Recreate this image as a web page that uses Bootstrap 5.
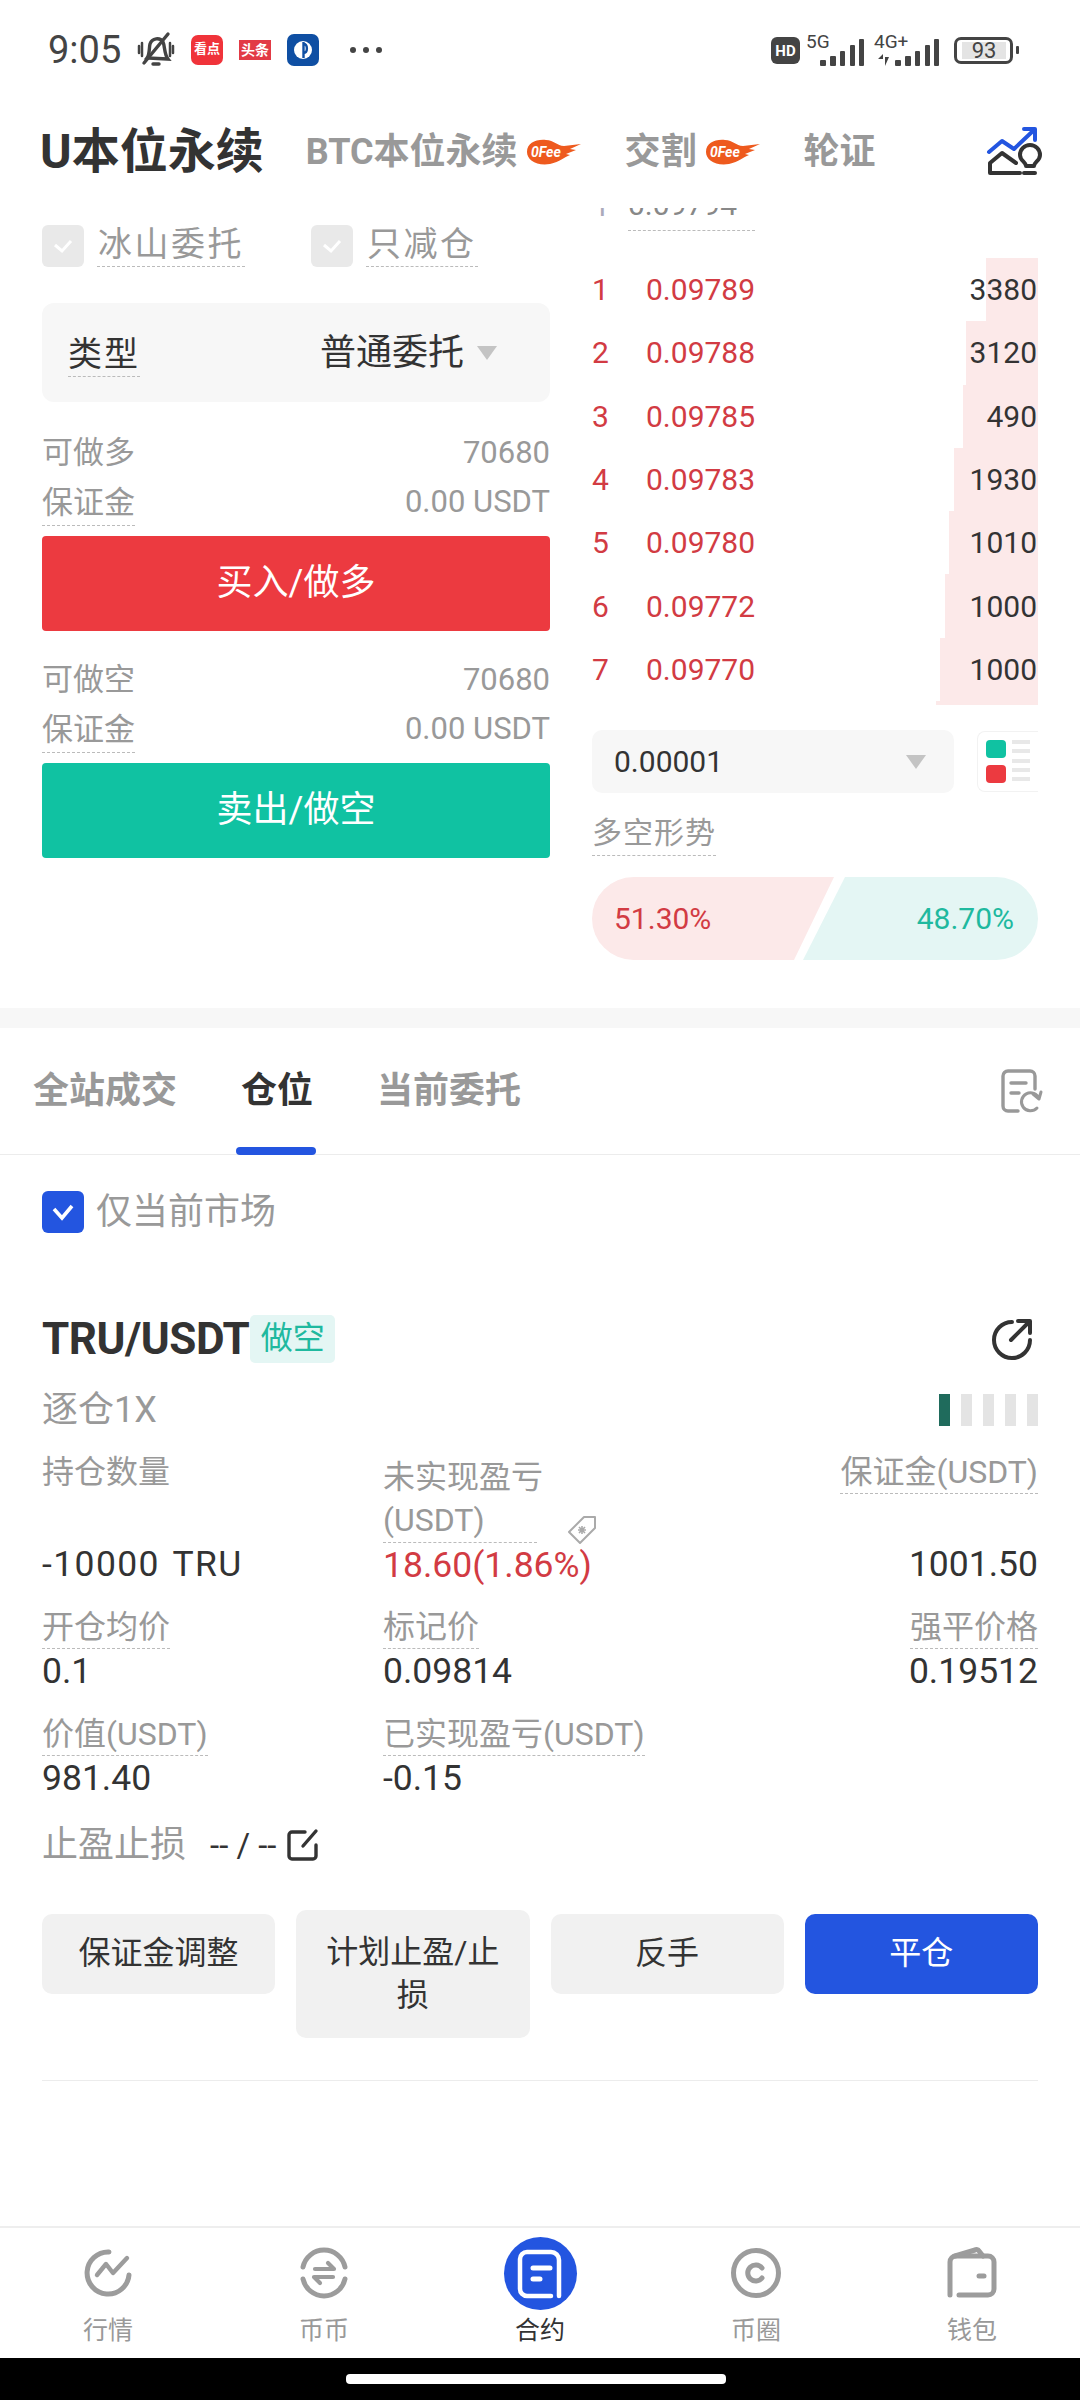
<!DOCTYPE html>
<html lang="zh-CN">
<head>
    <meta charset="UTF-8">
    <meta name="viewport" content="width=device-width, initial-scale=1.0">
    <title>U本位永续</title>
    <link href="https://cdn.jsdelivr.net/npm/bootstrap@5.3.0/dist/css/bootstrap.min.css" rel="stylesheet">
    <style>
        body {
            margin: 0;
            width: 1080px;
            height: 2400px;
            overflow: hidden;
            background: #fff;
            color: #333;
            font-family: Roboto, "Noto Sans CJK SC", sans-serif;
            display: flex;
            flex-direction: column;
        }
        svg { display: block; flex: none; overflow: visible; }

        /* status bar */
        #status-bar { height: 100px; padding: 0 61px 0 48px; color: #444; }
        .clock { font-size: 38px; line-height: 1; width: 89px; }
        .app-tile { color: #fff; text-align: center; font-weight: 700; }
        .tile-watch { width: 32px; height: 30px; margin-left: 16px; background: #f0333a; border-radius: 7px; font-size: 13px; line-height: 28px; }
        .tile-news { width: 32px; height: 20px; margin-left: 16px; background: #e23a45; font-size: 14px; line-height: 20px; }
        .batt-box { width: 59px; height: 27px; border: 3px solid #444; border-radius: 7px; padding: 2px 5px; margin-left: 14px; }
        .batt-fill { background: #e4e4e4; height: 17px; font-size: 22px; line-height: 17px; text-align: center; width: 44px; }
        .batt-nub { width: 3px; height: 8px; background: #444; border-radius: 1px; margin-left: 3px; }

        /* product tabs */
        #product-tabs { height: 104px; padding: 0 37px 0 40px; }
        .title-main { font-size: 48px; font-weight: 700; color: #333; line-height: 1; margin-right: 42px; }
        .title-sub { font-size: 36px; font-weight: 700; color: #999; line-height: 1; margin-right: 44px; }

        /* trade area */
        #trade-area { height: 804px; padding: 0 42px; gap: 42px; overflow: hidden; }
        #order-form { width: 508px; flex: none; }
        #book-side { width: 446px; flex: none; }
        .dash-label { display: inline-block; border-bottom: 1px dashed #bbb; color: #999; }
        .tick-box { width: 42px; height: 42px; border-radius: 6px; background: #e9e9e9; display: flex; align-items: center; justify-content: center; }
        .tick-box.is-on { background: #2355e0; }
        .check-row { padding-top: 21px; height: 66px; }
        .check-text { font-size: 34px; line-height: 44px; padding: 0 1px; margin-left: 13px; letter-spacing: 2.5px; margin-top: -3px; }
        .type-select { height: 99px; margin-top: 33px; padding: 0 53px 0 26px; background: #f7f7f7; border-radius: 12px; }
        .type-key { font-size: 34px; line-height: 44px; color: #333; letter-spacing: 2px; margin-top: 4px; }
        .type-val { font-size: 36px; color: #333; line-height: 1; margin-right: 13px; }
        .drop-tri { width: 0; height: 0; border-left: 10px solid transparent; border-right: 10px solid transparent; border-top: 14px solid #c4c4c4; }
        .info-row { height: 49px; color: #999; font-size: 31px; }
        .info-row .dash-label { font-size: 31px; line-height: 44px; margin-top: 2px; }
        .info-head { font-size: 31px; }
        .btn.trade-btn { display: block; width: 100%; height: 95px; border: 0; border-radius: 4px; color: #fff; font-size: 36px; line-height: 95px; padding: 0; margin-top: 9px; }
        .trade-long { background: #ec3a40; }
        .trade-short { background: #10c2a2; }

        /* order book */
        .book-clip { height: 23px; margin-top: 4px; overflow: hidden; position: relative; }
        .book-clip .clip-inner { position: absolute; bottom: 0; left: 0; display: flex; align-items: flex-end; }
        .clip-num { width: 36px; font-size: 30px; line-height: 50px; color: #aab; padding-left: 1px; }
        .clip-price { font-size: 30px; line-height: 50px; color: #888; border-bottom: 1px dashed #bbb; padding-right: 18px; }
        .book-rows { margin-top: 27px; }
        .book-row { height: 63.3px; position: relative; font-size: 30px; }
        .depth-bar { position: absolute; top: 0; right: 0; bottom: 0; background: #fce9e9; }
        .lvl { width: 54px; color: #d23b43; position: relative; }
        .price-red { color: #d23b43; position: relative; }
        .qty { margin-left: auto; color: #333; position: relative; padding-right: 1px; }
        .depth-tail { height: 4px; margin-left: auto; background: #fce9e9; }
        .step-row { margin-top: 25px; }
        .step-select { width: 362px; height: 63px; background: #f7f7f7; border-radius: 10px; padding: 0 28px 0 22px; font-size: 30px; color: #333; }
        .layout-btn { width: 61px; height: 61px; border: 1px solid #f2f2f2; border-right: 0; border-radius: 8px 0 0 8px; padding: 8px; gap: 6px; }
        .ly-cells { gap: 7px; }
        .ly-cell { width: 20px; height: 19px; border-radius: 4px; }
        .ly-lines { display: flex; flex-direction: column; justify-content: space-between; flex: 1; padding: 0 0 2px; }
        .ly-lines i { display: block; height: 4px; background: #e8e8e8; }
        .trend-title { font-size: 30px; line-height: 44px; letter-spacing: 1px; margin-top: 18px; }
        .trend-pill { margin-top: 21px; height: 83px; font-size: 30px; }
        .trend-left { width: 242px; height: 83px; flex: none; background: #fce9e9; color: #d23b43; border-radius: 42px 0 0 42px; padding-left: 22px; clip-path: polygon(0 0, 100% 0, 202px 100%, 0 100%); }
        .trend-right { width: 235px; height: 83px; flex: none; margin-left: -31px; background: #e4f6f4; color: #1fb99f; border-radius: 0 42px 42px 0; padding-right: 24px; clip-path: polygon(42px 0, 100% 0, 100% 100%, 0 100%); }

        .gap-band { height: 20px; background: #f7f7f7; }

        /* list tabs */
        #list-tabs { height: 127px; padding: 0 37px 0 33px; border-bottom: 1px solid #ececec; }
        .list-tab { font-size: 36px; font-weight: 700; color: #999; position: relative; margin-right: 64px; line-height: 1; }
        .list-tab.is-active { color: #333; }
        .list-tab.is-active::after { content: ""; position: absolute; left: -5px; right: -3px; bottom: -46px; height: 8px; background: #2355e0; border-radius: 4px; }

        /* position card */
        #position-pane { padding: 0 42px; flex: 1; }
        .only-row { margin-top: 36px; height: 42px; }
        .only-text { font-size: 36px; color: #999; margin-left: 12px; line-height: 1; }
        .pair-row { margin-top: 82px; height: 48px; }
        .pair-name { font-size: 44px; font-weight: 700; color: #333; line-height: 1; letter-spacing: -.5px; }
        .side-tag { width: 85px; height: 48px; line-height: 46px; text-align: center; background: #e4f6f4; color: #1fb99f; font-size: 32px; border-radius: 5px; margin-left: 1px; }
        .margin-row { height: 50px; margin-top: 22px; }
        .margin-mode { font-size: 36px; color: #999; line-height: 1; }
        .risk-bars { gap: 11px; }
        .risk-bars i { display: block; width: 11px; height: 32px; background: #e4e4e4; }
        .risk-bars i.is-on { background: #1f6b5c; }
        .metric-grid { display: grid; grid-template-columns: 341px 1fr auto; margin-top: 15px; }
        .metric { display: flex; flex-direction: column; align-items: flex-start; }
        .metric.at-end { align-items: flex-end; }
        .metric-key { font-size: 32px; line-height: 44px; color: #999; border-bottom: 1px dashed #bbb; height: 44px; white-space: nowrap; }
        .metric-key.no-dash { border-bottom: 0; }
        .metric-val { font-size: 35.5px; line-height: 44px; color: #333; }
        .metric-val.wide-val { letter-spacing: 1.4px; word-spacing: 3px; }
        .row-one { height: 136px; justify-content: space-between; }
        .row-next { height: 88px; margin-top: 19px; }
        .wrap-key { height: auto; line-height: 43px; margin-top: 6px; width: 154px; position: relative; }
        .tag-mark { position: absolute; left: 183px; top: 58px; }
        .stop-row { margin-top: 22px; height: 46px; }
        .stop-key { font-size: 36px; color: #999; line-height: 1; }
        .stop-val { font-size: 33px; color: #333; line-height: 1; margin: 0 11px 0 24px; }
        .act-row { display: grid; grid-template-columns: repeat(4, 1fr); margin-top: 46px; gap: 21px; align-items: start; }
        .btn.act-btn { background: #f1f1f1; color: #333; border: 0; border-radius: 10px; font-size: 32px; line-height: 43px; padding: 18px 16px 19px; }
        .btn.act-btn.act-tall { margin-top: -4px; padding: 21px 26px; }
        .btn.act-btn.act-main { background: #2355e0; color: #fff; }
        .card-rule { margin-top: 42px; border-top: 1px solid #ececec; }

        /* bottom nav */
        #bottom-nav { height: 132px; border-top: 2px solid #eee; flex: none; }
        .nav-slot { flex: 1 1 0; display: flex; flex-direction: column; align-items: center; height: 130px; color: #999; font-size: 25px; }
        .nav-glyph { height: 90px; display: flex; align-items: center; justify-content: center; }
        .nav-slot span { line-height: 1; }
        .nav-slot.is-active { color: #333; }
        #gesture-bar { height: 42px; background: #000; flex: none; padding-top: 16px; }
        .gesture-pill { width: 380px; height: 10px; background: #fff; border-radius: 4px; margin: 0 auto; transform: translateX(-4px); }
    </style>
</head>
<body>
    <div id="status-bar" class="d-flex align-items-center flex-none">
        <div class="clock">9:05</div>
        <svg width="38" height="36" viewBox="0 0 38 36" fill="none" stroke="#444" stroke-width="3.4" stroke-linecap="round">
            <path d="M10 26 C13 22 12 15 13 12 C15 6 23 5 26 10 C28 14 27 22 31 27 Z"/>
            <path d="M16 32 H22"/>
            <path d="M7 31 L31 2"/>
            <path d="M2 14 V21 M5 11 V24 M33 11 V24 M36 14 V21" stroke-width="2.5"/>
        </svg>
        <div class="app-tile tile-watch">看点</div>
        <div class="app-tile tile-news">头条</div>
        <svg class="ms-3" width="32" height="32" viewBox="0 0 32 32">
            <rect width="32" height="32" rx="7" fill="#0f4fa3"/>
            <circle cx="16" cy="16" r="9" fill="#fff"/>
            <path d="M16.5 8 V24 M16.5 10 C21 10 21 19 16.5 19" fill="none" stroke="#0f4fa3" stroke-width="2.4"/>
        </svg>
        <svg style="margin-left:30px" width="34" height="8" viewBox="0 0 34 8" fill="#444">
            <circle cx="4" cy="4" r="3"/><circle cx="17" cy="4" r="3"/><circle cx="30" cy="4" r="3"/>
        </svg>
        <svg class="ms-auto" width="29" height="27" viewBox="0 0 29 27">
            <rect width="29" height="27" rx="6" fill="#444"/>
            <text x="14.5" y="19" text-anchor="middle" font-family="Roboto" font-weight="700" font-size="15" fill="#fff">HD</text>
        </svg>
        <svg style="margin-left:6px" width="60" height="34" viewBox="0 0 60 34" fill="#444">
            <text x="0" y="15" font-family="Roboto" font-size="19">5G</text>
            <rect x="14" y="27" width="6" height="6" rx="1"/><rect x="24" y="23" width="6" height="10" rx="1"/><rect x="34" y="18" width="5" height="15" rx="1"/><rect x="44" y="12" width="5" height="21" rx="1"/><rect x="53" y="6" width="5" height="27" rx="1"/>
        </svg>
        <svg style="margin-left:8px" width="66" height="34" viewBox="0 0 66 34" fill="#444">
            <text x="0" y="15" font-family="Roboto" font-size="19">4G+</text>
            <path d="M4 26 H9 V21 Z M11 33 V24 L15 24 Z M11 23 L4 27 Z"/>
            <rect x="21" y="27" width="6" height="6" rx="1"/><rect x="31" y="23" width="6" height="10" rx="1"/><rect x="41" y="18" width="5" height="15" rx="1"/><rect x="51" y="12" width="5" height="21" rx="1"/><rect x="60" y="6" width="5" height="27" rx="1"/>
        </svg>
        <div class="batt-box"><div class="batt-fill">93</div></div>
        <div class="batt-nub"></div>
    </div>

    <div id="product-tabs" class="d-flex align-items-center">
        <div class="title-main">U本位永续</div>
        <div class="title-sub d-flex align-items-center">BTC本位永续
            <svg class="ms-2" width="55" height="26" viewBox="0 0 55 26"><path d="M1 13 C1 4 10 0 20 1 C28 1 31 7 38 7 L55 5 L44 10 L50 11 L40 15 L44 16 C38 18 34 23 24 25 C10 27 1 21 1 13 Z" fill="#ee5a1e"/><text x="5" y="18" font-family="Roboto" font-weight="700" font-style="italic" font-size="14" fill="#fff">0Fee</text></svg>
        </div>
        <div class="title-sub d-flex align-items-center">交割
            <svg class="ms-2" width="55" height="26" viewBox="0 0 55 26"><path d="M1 13 C1 4 10 0 20 1 C28 1 31 7 38 7 L55 5 L44 10 L50 11 L40 15 L44 16 C38 18 34 23 24 25 C10 27 1 21 1 13 Z" fill="#ee5a1e"/><text x="5" y="18" font-family="Roboto" font-weight="700" font-style="italic" font-size="14" fill="#fff">0Fee</text></svg>
        </div>
        <div class="title-sub">轮证</div>
        <svg class="ms-auto" width="56" height="52" viewBox="0 0 56 52" fill="none" stroke-linecap="round" stroke-linejoin="round">
            <path d="M2 26 L15 15 L27 23 L47 4 M37 3 H48 V14" stroke="#2355e0" stroke-width="4"/>
            <path d="M3 47 V37 L15 27 L29 37 M3 47 H33" stroke="#333" stroke-width="4"/>
            <path d="M39 40 C39 36 33 35 33 29 A10 10 0 0 1 53 29 C53 35 47 36 47 40 Z M37 47 H48" stroke="#333" stroke-width="4"/>
        </svg>
    </div>

    <div id="trade-area" class="d-flex">
        <div id="order-form">
            <div class="check-row d-flex align-items-start">
                <div class="tick-box"><svg width="22" height="16" viewBox="0 0 22 16" fill="none" stroke="#fff" stroke-width="3"><path d="M3 7 L10 13 L19 3"/></svg></div>
                <span class="dash-label check-text">冰山委托</span>
                <div class="tick-box" style="margin-left:66px"><svg width="22" height="16" viewBox="0 0 22 16" fill="none" stroke="#fff" stroke-width="3"><path d="M3 7 L10 13 L19 3"/></svg></div>
                <span class="dash-label check-text">只减仓</span>
            </div>
            <div class="type-select d-flex align-items-center justify-content-between">
                <span class="dash-label type-key">类型</span>
                <div class="d-flex align-items-center">
                    <span class="type-val">普通委托</span>
                    <div class="drop-tri"></div>
                </div>
            </div>
            <div class="info-row d-flex align-items-center justify-content-between" style="margin-top:27px"><span class="info-head">可做多</span><span>70680</span></div>
            <div class="info-row d-flex align-items-center justify-content-between"><span class="dash-label">保证金</span><span>0.00 USDT</span></div>
            <button class="btn trade-btn trade-long">买入/做多</button>
            <div class="info-row d-flex align-items-center justify-content-between" style="margin-top:25px"><span class="info-head">可做空</span><span>70680</span></div>
            <div class="info-row d-flex align-items-center justify-content-between"><span class="dash-label">保证金</span><span>0.00 USDT</span></div>
            <button class="btn trade-btn trade-short">卖出/做空</button>
        </div>

        <div id="book-side">
            <div class="book-clip">
                <div class="clip-inner"><span class="clip-num">1</span><span class="clip-price">0.09794</span></div>
            </div>
            <div class="book-rows">
                <div class="book-row d-flex align-items-center"><div class="depth-bar" style="width:52px"></div><span class="lvl">1</span><span class="price-red">0.09789</span><span class="qty">3380</span></div>
                <div class="book-row d-flex align-items-center"><div class="depth-bar" style="width:72px"></div><span class="lvl">2</span><span class="price-red">0.09788</span><span class="qty">3120</span></div>
                <div class="book-row d-flex align-items-center"><div class="depth-bar" style="width:75px"></div><span class="lvl">3</span><span class="price-red">0.09785</span><span class="qty">490</span></div>
                <div class="book-row d-flex align-items-center"><div class="depth-bar" style="width:84px"></div><span class="lvl">4</span><span class="price-red">0.09783</span><span class="qty">1930</span></div>
                <div class="book-row d-flex align-items-center"><div class="depth-bar" style="width:89px"></div><span class="lvl">5</span><span class="price-red">0.09780</span><span class="qty">1010</span></div>
                <div class="book-row d-flex align-items-center"><div class="depth-bar" style="width:93px"></div><span class="lvl">6</span><span class="price-red">0.09772</span><span class="qty">1000</span></div>
                <div class="book-row d-flex align-items-center"><div class="depth-bar" style="width:98px"></div><span class="lvl">7</span><span class="price-red">0.09770</span><span class="qty">1000</span></div>
                <div class="depth-tail" style="width:102px"></div>
            </div>
            <div class="step-row d-flex justify-content-between align-items-center">
                <div class="step-select d-flex align-items-center justify-content-between"><span>0.00001</span><div class="drop-tri"></div></div>
                <div class="layout-btn d-flex">
                    <div class="ly-cells d-flex flex-column">
                        <div class="ly-cell" style="background:#10c2a2"></div>
                        <div class="ly-cell" style="background:#ec3a40"></div>
                    </div>
                    <div class="ly-lines"><i></i><i></i><i></i><i></i><i></i></div>
                </div>
            </div>
            <span class="dash-label trend-title">多空形势</span>
            <div class="trend-pill d-flex">
                <div class="trend-left d-flex align-items-center">51.30%</div>
                <div class="trend-right d-flex align-items-center justify-content-end">48.70%</div>
            </div>
        </div>
    </div>

    <div class="gap-band"></div>

    <div id="list-tabs" class="d-flex align-items-center">
        <div class="list-tab">全站成交</div>
        <div class="list-tab is-active">仓位</div>
        <div class="list-tab">当前委托</div>
        <svg class="ms-auto" width="42" height="44" viewBox="0 0 42 44" fill="none" stroke="#999" stroke-width="3.4" stroke-linecap="round" stroke-linejoin="round">
            <path d="M17 42 H7 A5 5 0 0 1 2 37 V7 A5 5 0 0 1 7 2 H29 A5 5 0 0 1 34 7 V20"/>
            <path d="M10 14 H25 M10 24 H18"/>
            <path d="M38 30 A9 9 0 1 0 36 39 M32 25 L38 30 L40 23" stroke-width="3"/>
        </svg>
    </div>

    <div id="position-pane">
        <div class="only-row d-flex align-items-center">
            <div class="tick-box is-on"><svg width="24" height="18" viewBox="0 0 24 18" fill="none" stroke="#fff" stroke-width="3.6"><path d="M3 6 L11 15 L21 3"/></svg></div>
            <span class="only-text">仅当前市场</span>
        </div>
        <div class="pair-row d-flex align-items-center">
            <span class="pair-name">TRU/USDT</span>
            <span class="side-tag">做空</span>
            <svg class="ms-auto" style="margin-right:5px" width="42" height="42" viewBox="0 0 42 42" fill="none" stroke="#333" stroke-width="4" stroke-linecap="round" stroke-linejoin="round">
                <path d="M21 4 A18 18 0 1 0 39 22"/>
                <path d="M20 22 L38 4 M27 3 H39 V15"/>
            </svg>
        </div>
        <div class="margin-row d-flex align-items-center justify-content-between">
            <span class="margin-mode">逐仓1X</span>
            <div class="risk-bars d-flex"><i class="is-on"></i><i></i><i></i><i></i><i></i></div>
        </div>
        <div class="metric-grid">
            <div class="metric row-one"><span class="metric-key no-dash">持仓数量</span><span class="metric-val wide-val">-10000 TRU</span></div>
            <div class="metric row-one">
                <span class="metric-key wrap-key">未实现盈亏<br>(USDT)
                    <svg class="tag-mark" width="32" height="32" viewBox="0 0 32 32" fill="none" stroke="#aaa" stroke-width="2"><path d="M29 3 L18 3 L3 18 L14 29 L29 14 Z" stroke-linejoin="round"/><path d="M16 12 V20 M12 16 H20 M13 13 L19 19 M19 13 L13 19" stroke-width="1.6"/></svg>
                </span>
                <span class="metric-val" style="color:#d23b43">18.60(1.86%)</span>
            </div>
            <div class="metric at-end row-one"><span class="metric-key">保证金(USDT)</span><span class="metric-val">1001.50</span></div>

            <div class="metric row-next"><span class="metric-key">开仓均价</span><span class="metric-val">0.1</span></div>
            <div class="metric row-next"><span class="metric-key">标记价</span><span class="metric-val">0.09814</span></div>
            <div class="metric at-end row-next"><span class="metric-key">强平价格</span><span class="metric-val">0.19512</span></div>

            <div class="metric row-next"><span class="metric-key">价值(USDT)</span><span class="metric-val">981.40</span></div>
            <div class="metric row-next"><span class="metric-key">已实现盈亏(USDT)</span><span class="metric-val">-0.15</span></div>
            <div class="metric row-next"></div>
        </div>
        <div class="stop-row d-flex align-items-center">
            <span class="stop-key">止盈止损</span>
            <span class="stop-val">-- / --</span>
            <svg width="32" height="32" viewBox="0 0 32 32" fill="none" stroke="#333" stroke-width="3.4" stroke-linecap="round" stroke-linejoin="round">
                <path d="M18 3 H5 A3 3 0 0 0 2 6 V27 A3 3 0 0 0 5 30 H26 A3 3 0 0 0 29 27 V16"/>
                <path d="M16 17 L29 2"/>
            </svg>
        </div>
        <div class="act-row">
            <button class="btn act-btn">保证金调整</button>
            <button class="btn act-btn act-tall">计划止盈/止损</button>
            <button class="btn act-btn">反手</button>
            <button class="btn act-btn act-main">平仓</button>
        </div>
        <div class="card-rule"></div>
    </div>

    <div id="bottom-nav" class="d-flex">
        <div class="nav-slot">
            <div class="nav-glyph">
                <svg width="50" height="50" viewBox="0 0 50 50" fill="none" stroke="#9c9c9c" stroke-width="5" stroke-linecap="round" stroke-linejoin="round">
                    <path d="M26 4 A21 21 0 1 0 46 27"/>
                    <path d="M14 27 L23 16 L30 25 L44 10" stroke-width="4.4"/>
                </svg>
            </div>
            <span>行情</span>
        </div>
        <div class="nav-slot">
            <div class="nav-glyph">
                <svg width="50" height="50" viewBox="0 0 50 50" fill="none" stroke="#9c9c9c" stroke-width="5" stroke-linecap="round" stroke-linejoin="round">
                    <path d="M4 19 A21.5 21.5 0 0 1 46 19 M4 31 A21.5 21.5 0 0 0 46 31"/>
                    <path d="M16 21 H35 L29 15 M34 29 H15 L21 35" stroke-width="4.2"/>
                </svg>
            </div>
            <span>币币</span>
        </div>
        <div class="nav-slot is-active">
            <div class="nav-glyph">
                <svg width="73" height="73" viewBox="0 0 73 73" fill="none" stroke="#fff" stroke-width="4.5" stroke-linecap="round" stroke-linejoin="round">
                    <circle cx="36.5" cy="36.5" r="36.5" fill="#2355e0" stroke="none"/>
                    <path d="M47 59 H23 A7 7 0 0 1 16 52 V22 A7 7 0 0 1 23 15 H47 A8 8 0 0 1 55 23 V59"/>
                    <path d="M29 31 H46 M29 42 H36" stroke-width="5"/>
                </svg>
            </div>
            <span>合约</span>
        </div>
        <div class="nav-slot">
            <div class="nav-glyph">
                <svg width="50" height="50" viewBox="0 0 50 50" fill="none" stroke="#9c9c9c" stroke-width="5" stroke-linecap="round">
                    <circle cx="25" cy="25" r="22.5"/>
                    <path d="M31 20 A8 8 0 1 0 31 30"/>
                </svg>
            </div>
            <span>币圈</span>
        </div>
        <div class="nav-slot">
            <div class="nav-glyph">
                <svg width="50" height="50" viewBox="0 0 50 50" fill="none" stroke="#9c9c9c" stroke-width="5" stroke-linecap="round" stroke-linejoin="round">
                    <path d="M3 47 V14 A6 6 0 0 1 9 8 H41 A6 6 0 0 1 47 14 V41 A6 6 0 0 1 41 47 H12"/>
                    <path d="M8 8 L28 2 A3 3 0 0 1 32 3 L36 8"/>
                    <path d="M32 28 H37"/>
                </svg>
            </div>
            <span>钱包</span>
        </div>
    </div>
    <div id="gesture-bar"><div class="gesture-pill"></div></div>

    <script src="https://cdn.jsdelivr.net/npm/bootstrap@5.3.0/dist/js/bootstrap.bundle.min.js"></script>
</body>
</html>
